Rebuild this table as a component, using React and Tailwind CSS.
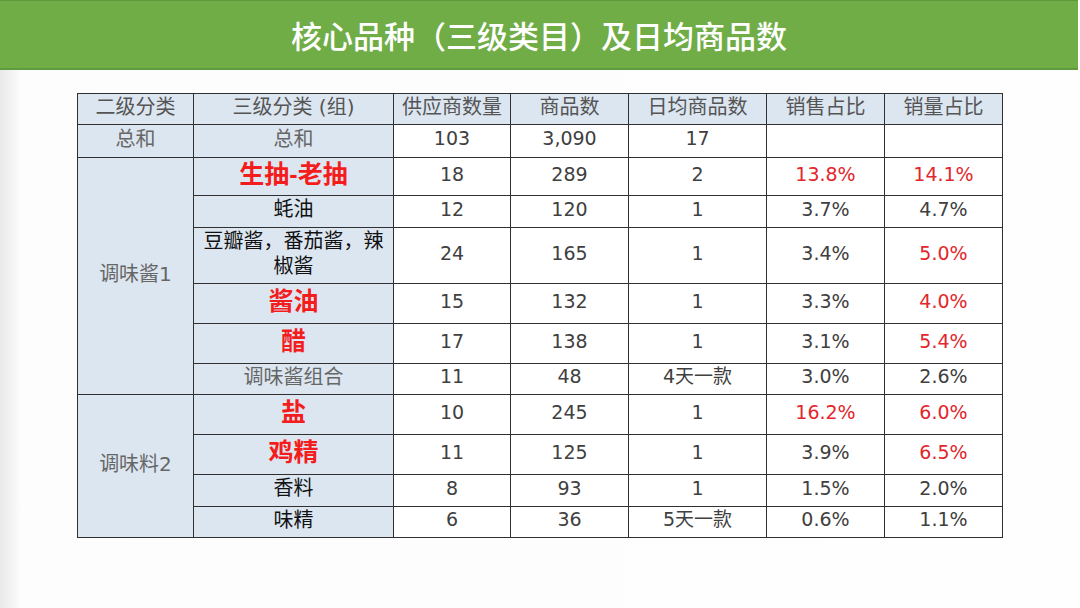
import React from "react";

const RED = "text-[#e3262b]";
const rows = [
  { l2: { text: "调味酱1", span: 6 }, l3: "生抽-老抽", l3s: "bold", h: "h-[38px]", v: ["18", "289", "2", "13.8%", "14.1%"], red: [3, 4] },
  { l3: "蚝油", l3s: "black", h: "h-[32px]", v: ["12", "120", "1", "3.7%", "4.7%"], red: [] },
  { l3: "豆瓣酱", l3s: "wrap", h: "h-[56px]", v: ["24", "165", "1", "3.4%", "5.0%"], red: [4] },
  { l3: "酱油", l3s: "bold", h: "h-[40px]", v: ["15", "132", "1", "3.3%", "4.0%"], red: [4] },
  { l3: "醋", l3s: "bold", h: "h-[40px]", v: ["17", "138", "1", "3.1%", "5.4%"], red: [4] },
  { l3: "调味酱组合", l3s: "gray", h: "h-[31px]", v: ["11", "48", "4天一款", "3.0%", "2.6%"], red: [] },
  { l2: { text: "调味料2", span: 4 }, l3: "盐", l3s: "bold", h: "h-[40px]", v: ["10", "245", "1", "16.2%", "6.0%"], red: [3, 4] },
  { l3: "鸡精", l3s: "bold", h: "h-[40px]", v: ["11", "125", "1", "3.9%", "6.5%"], red: [4] },
  { l3: "香料", l3s: "black", h: "h-[32px]", v: ["8", "93", "1", "1.5%", "2.0%"], red: [] },
  { l3: "味精", l3s: "black", h: "h-[31px]", v: ["6", "36", "5天一款", "0.6%", "1.1%"], red: [] },
];

const cell = "border border-[#303030] text-center align-middle pt-0 px-0 pb-[4px] leading-[1.15]";
const bodyFont = { fontFamily: '"DejaVu Sans", "Noto Sans CJK SC", sans-serif' };

function L3({ s, text }) {
  if (s === "bold")
    return (
      <span className="text-[25px] font-bold text-[#f41d1d] leading-none" style={{ fontFamily: '"Liberation Sans", "Noto Sans CJK SC", sans-serif' }}>
        {text}
      </span>
    );
  if (s === "gray") return <span className="text-[20px] text-[#666]">{text}</span>;
  if (s === "wrap")
    return (
      <span className="block text-[20px] leading-[25px] text-[#111]">
        豆瓣酱，番茄酱，辣
        <br />
        椒酱
      </span>
    );
  return <span className="text-[20px] text-[#111]">{text}</span>;
}

export default function App() {
  return (
    <div
      className="w-[1080px] h-[608px] overflow-hidden bg-[linear-gradient(to_right,#e9e9e9,#fdfdfd_22px,#fefefe)]"
      style={bodyFont}
    >
      <div className="h-[70px] w-[1078px] bg-[#70ad47] border-t border-[#5e9a3a] border-b-2 border-b-[#5f9b3b] flex items-center justify-center">
        <span className="text-white text-[31px] font-medium leading-none" style={{ fontFamily: '"Noto Sans CJK SC", sans-serif' }}>
          核心品种（三级类目）及日均商品数
        </span>
      </div>
      <div className="pt-[23px] pl-[77px]">
        <table className="border-collapse table-fixed w-[925px] text-[#404040]">
          <colgroup>
            <col className="w-[116px]" />
            <col className="w-[200px]" />
            <col className="w-[117px]" />
            <col className="w-[118px]" />
            <col className="w-[138px]" />
            <col className="w-[118px]" />
            <col className="w-[118px]" />
          </colgroup>
          <tbody>
            <tr className="h-[31px] bg-[#dce6f1] text-[20px] text-[#555]">
              <td className={cell}>二级分类</td>
              <td className={cell}>三级分类 (组)</td>
              <td className={cell}>供应商数量</td>
              <td className={cell}>商品数</td>
              <td className={cell}>日均商品数</td>
              <td className={cell}>销售占比</td>
              <td className={cell}>销量占比</td>
            </tr>
            <tr className="h-[33px] text-[19px]">
              <td className={`${cell} bg-[#dce6f1] text-[#666] text-[20px]`}>总和</td>
              <td className={`${cell} bg-[#dce6f1] text-[#666] text-[20px]`}>总和</td>
              <td className={`${cell} bg-white`}>103</td>
              <td className={`${cell} bg-white`}>3,090</td>
              <td className={`${cell} bg-white`}>17</td>
              <td className={`${cell} bg-white`}></td>
              <td className={`${cell} bg-white`}></td>
            </tr>
            {rows.map((r, i) => (
              <tr key={i} className={`${r.h} text-[19px]`}>
                {r.l2 && (
                  <td rowSpan={r.l2.span} className={`${cell} bg-[#dce6f1] text-[#666] text-[20px]`}>
                    {r.l2.text}
                  </td>
                )}
                <td className={`${cell} bg-[#dce6f1]`}>
                  <L3 s={r.l3s} text={r.l3} />
                </td>
                {r.v.map((v, j) => (
                  <td key={j} className={`${cell} bg-white ${r.red.includes(j) ? RED : ""}`}>
                    {v}
                  </td>
                ))}
              </tr>
            ))}
          </tbody>
        </table>
      </div>
    </div>
  );
}
